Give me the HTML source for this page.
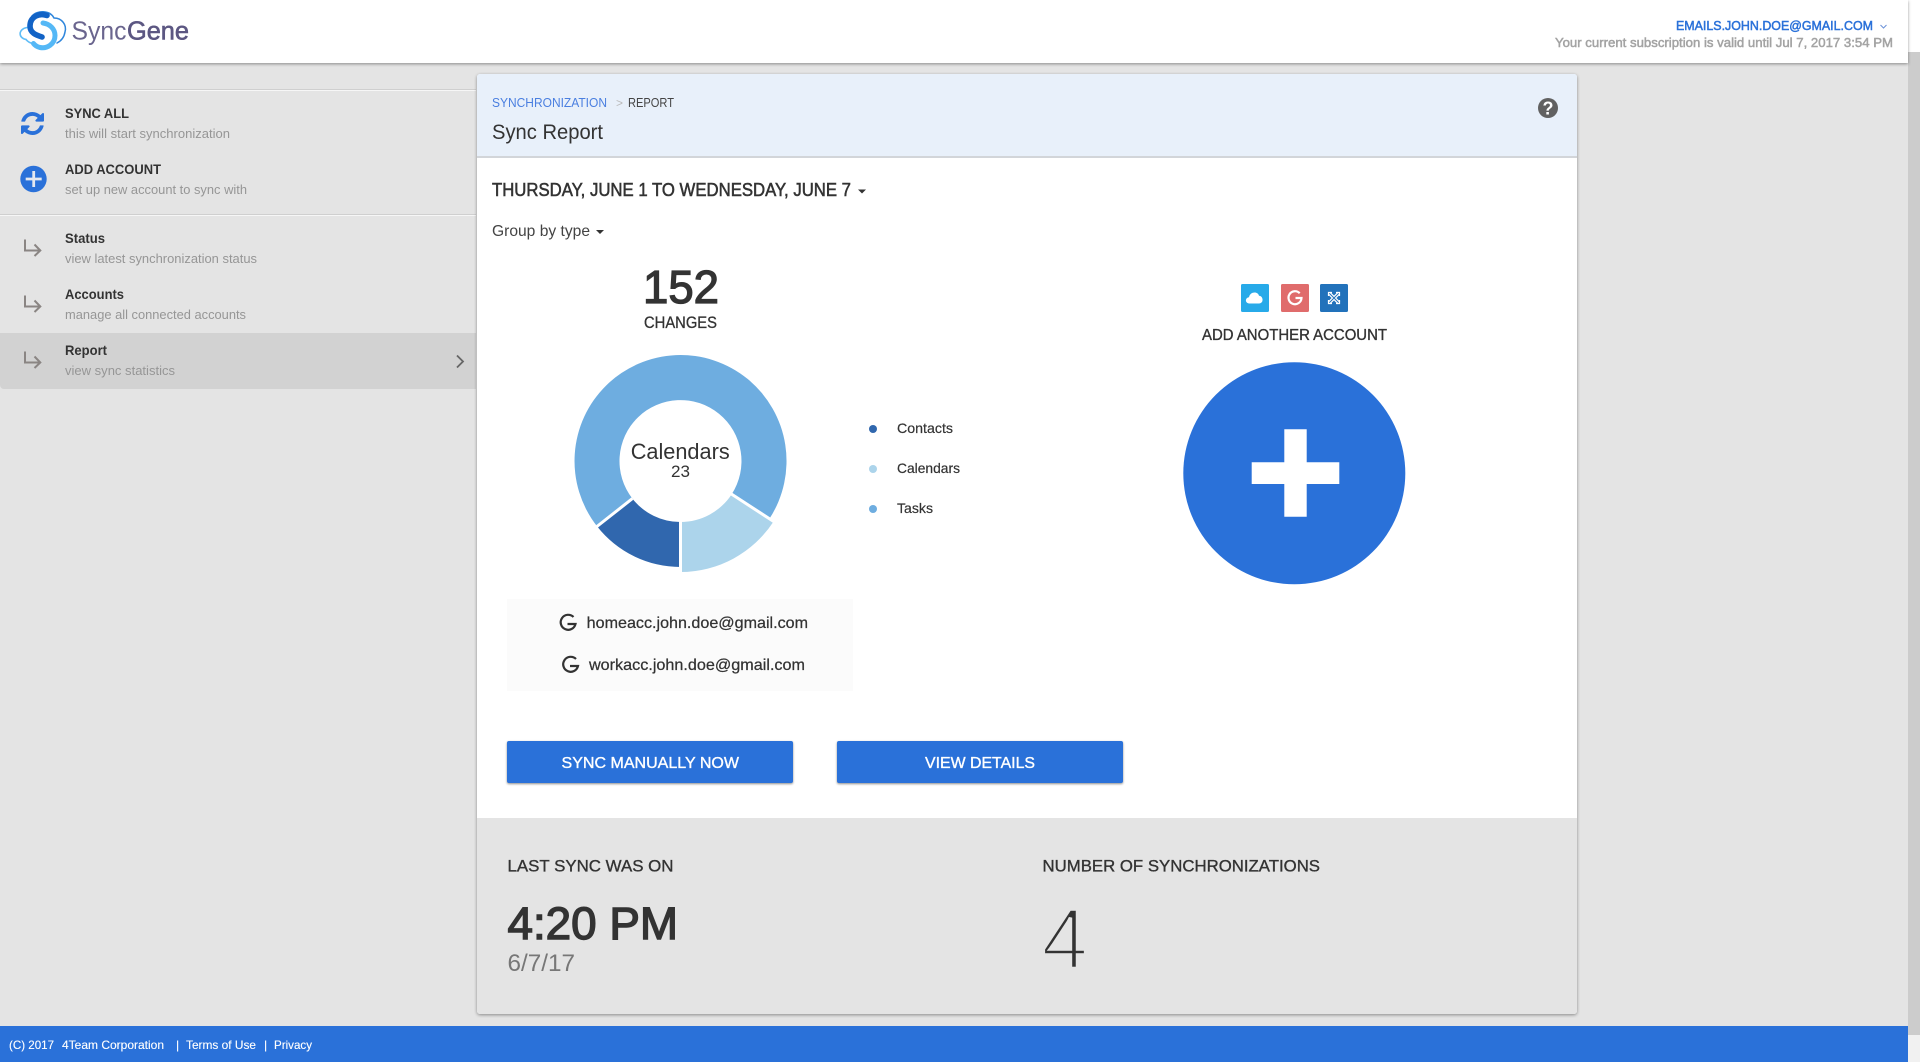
<!DOCTYPE html>
<html lang="en">
<head>
<meta charset="utf-8">
<title>SyncGene - Sync Report</title>
<style>
html,body{margin:0;padding:0;width:1920px;height:1062px;overflow:hidden;background:#e4e4e4;font-family:"Liberation Sans",Arial,sans-serif}
.b{position:absolute}
svg{position:absolute;left:0;top:0}
text{font-family:"Liberation Sans",Arial,sans-serif;fill:#333;white-space:pre}
.m{stroke:currentColor;stroke-width:.3;color:#333}
.t{font-size:14px;font-weight:700;fill:#333}
.s{font-size:13px;fill:#969696}
.w{fill:#fff;font-size:12px;stroke:#fff;stroke-width:.12}
</style>
</head>
<body>
<div class="b" style="left:1908px;top:52px;width:12px;height:983px;background:#ccc"></div>
<div class="b" style="left:1908px;top:1035px;width:12px;height:27px;background:#f1f1f1"></div>
<div class="b" style="left:1908px;top:0;width:12px;height:52px;background:#fff"></div>

<!-- sidebar -->
<div class="b" style="left:0;top:89px;width:476px;height:1px;background:#cfcfcf"></div>
<div class="b" style="left:0;top:90px;width:476px;height:1px;background:#f6f6f6"></div>
<div class="b" style="left:0;top:214px;width:476px;height:1px;background:#cfcfcf"></div>
<div class="b" style="left:0;top:215px;width:476px;height:1px;background:#f6f6f6"></div>
<div class="b" style="left:0;top:333px;width:476px;height:56px;background:#d2d2d2;border-radius:0 0 0 4px"></div>

<!-- header -->
<div class="b" style="left:0;top:0;width:1908px;height:63px;background:#fff;box-shadow:0 1px 3px rgba(0,0,0,.4)"></div>

<!-- card -->
<div class="b" style="left:477px;top:74px;width:1100px;height:940px;background:#fff;border-radius:3px;box-shadow:0 1px 3px rgba(0,0,0,.4);overflow:hidden">
  <div class="b" style="left:0;top:0;width:1100px;height:82px;background:#e8f0fa;border-bottom:2px solid #d2d5d9"></div>
  <div class="b" style="left:0;top:744px;width:1100px;height:196px;background:#e4e4e4"></div>
</div>

<div class="b" style="left:507px;top:599px;width:346px;height:92px;background:#fbfbfb"></div>
<div class="b" style="left:507px;top:741px;width:286px;height:42px;background:#2a71d9;border-radius:2px;box-shadow:0 1px 2px rgba(0,0,0,.45)"></div>
<div class="b" style="left:837px;top:741px;width:286px;height:42px;background:#2a71d9;border-radius:2px;box-shadow:0 1px 2px rgba(0,0,0,.45)"></div>

<!-- footer -->
<div class="b" style="left:0;top:1026px;width:1908px;height:36px;background:#2a71d9"></div>

<svg width="1920" height="1062" viewBox="0 0 1920 1062" xmlns="http://www.w3.org/2000/svg">
  <!-- logo -->
  <g fill="none" stroke-linecap="round">
    <path d="M26 39.500C18 38 18 29 27 27.500" stroke="#5fbdf7" stroke-width="1.600"/>
    <path d="M32 16C37 10 50 10 54 18C62 18 67 25 65 32C64 38 61 41 57 43" stroke="#2f86dc" stroke-width="1.500"/>
    <path d="M26 39.500C28 42 30 43 33 43.500" stroke="#5fbdf7" stroke-width="1.600"/>
    <path d="M43 23C50 24 55 29 55 35.500C55 44 47 49 40 47.500C37 46.800 35 45.500 33.500 43.500" stroke="#55b8f6" stroke-width="5"/>
    <path d="M47 15.500C39 12.500 30 17 30 26C30 33 36 35 42 37" stroke="#1263c6" stroke-width="5.600"/>
  </g>
  <text x="71.500" y="39.500" font-size="26" style="fill:#6a658e" textLength="55" lengthAdjust="spacingAndGlyphs">Sync</text>
  <text x="127" y="39.500" font-size="26" class="m" style="fill:#5c5782;color:#5c5782;stroke-width:.6" textLength="62" lengthAdjust="spacingAndGlyphs">Gene</text>

  <!-- top right -->
  <text x="1676" y="30" font-size="13" class="m" style="fill:#2a71d9;color:#2a71d9;stroke-width:.5" textLength="197" lengthAdjust="spacingAndGlyphs">EMAILS.JOHN.DOE@GMAIL.COM</text>
  <path d="M1880.500 25L1883.500 28L1886.500 25" fill="none" stroke="#6c93d8" stroke-width="1"/>
  <text x="1555" y="47" font-size="13" class="m" style="fill:#a3a3a3;color:#a3a3a3;stroke-width:.5" textLength="338" lengthAdjust="spacingAndGlyphs">Your current subscription is valid until Jul 7, 2017 3:54 PM</text>

  <!-- sidebar icons -->
  <svg x="21" y="112" width="23" height="23" viewBox="0 0 1536 1536"><path fill="#2a71d9" d="M1511 928q0 5-1 7-64 268-268 434.5t-478 166.5q-146 0-282.5-55t-243.5-157l-129 129q-19 19-45 19t-45-19-19-45v-448q0-26 19-45t45-19h448q26 0 45 19t19 45-19 45l-137 137q71 66 161 102t187 36q134 0 250-65t186-179q11-17 53-117 8-23 30-23h192q13 0 22.5 9.5t9.5 22.5zm25-800v448q0 26-19 45t-45 19h-448q-26 0-45-19t-19-45 19-45l138-138q-148-137-349-137-134 0-250 65t-186 179q-11 17-53 117-8 23-30 23h-199q-13 0-22.5-9.5t-9.5-22.5v-7q65-268 270-434.5t480-166.5q146 0 284 55.5t245 156.5l130-129q19-19 45-19t45 19 19 45z"/></svg>
  <circle cx="33.500" cy="179" r="13.200" fill="#2a71d9"/>
  <path d="M25.700 179H41.700M33.700 171V187" stroke="#e4e8ef" stroke-width="2.800" fill="none"/>
  <g fill="none" stroke="#8a8583" stroke-width="2">
    <path d="M25 239.500V250.500H39.500M34.500 244.500L40.300 250.500L34.500 256"/>
    <path d="M25 295.500V306.500H39.500M34.500 300.500L40.300 306.500L34.500 312"/>
    <path d="M25 351.500V362.500H39.500M34.500 356.500L40.300 362.500L34.500 368"/>
  </g>
  <path d="M457 355.500L463 361.500L457 367.500" fill="none" stroke="#666" stroke-width="1.800"/>

  <!-- sidebar text -->
  <text x="65" y="118" class="t" textLength="64" lengthAdjust="spacingAndGlyphs">SYNC ALL</text>
  <text x="65" y="138" class="s" textLength="165" lengthAdjust="spacingAndGlyphs">this will start synchronization</text>
  <text x="65" y="174" class="t" textLength="96" lengthAdjust="spacingAndGlyphs">ADD ACCOUNT</text>
  <text x="65" y="194" class="s" textLength="182" lengthAdjust="spacingAndGlyphs">set up new account to sync with</text>
  <text x="65" y="243" class="t" textLength="40" lengthAdjust="spacingAndGlyphs">Status</text>
  <text x="65" y="263" class="s" textLength="192" lengthAdjust="spacingAndGlyphs">view latest synchronization status</text>
  <text x="65" y="299" class="t" textLength="59" lengthAdjust="spacingAndGlyphs">Accounts</text>
  <text x="65" y="319" class="s" textLength="181" lengthAdjust="spacingAndGlyphs">manage all connected accounts</text>
  <text x="65" y="355" class="t" textLength="42" lengthAdjust="spacingAndGlyphs">Report</text>
  <text x="65" y="375" class="s" textLength="110" lengthAdjust="spacingAndGlyphs">view sync statistics</text>

  <!-- card header -->
  <text x="492" y="107" font-size="13" style="fill:#4a7fe0" textLength="115" lengthAdjust="spacingAndGlyphs">SYNCHRONIZATION</text>
  <text x="616" y="107" font-size="12" style="fill:#bbb" textLength="7" lengthAdjust="spacingAndGlyphs">&gt;</text>
  <text x="628" y="107" font-size="13" style="fill:#444" textLength="46" lengthAdjust="spacingAndGlyphs">REPORT</text>
  <text x="492" y="139" font-size="21" textLength="111" lengthAdjust="spacingAndGlyphs">Sync Report</text>
  <circle cx="1548" cy="108" r="10" fill="#616161"/>
  <text x="1548" y="114.500" font-size="18" font-weight="700" text-anchor="middle" style="fill:#fff">?</text>

  <text x="492" y="196" font-size="18.500" class="m" style="stroke-width:.55" textLength="359" lengthAdjust="spacingAndGlyphs">THURSDAY, JUNE 1 TO WEDNESDAY, JUNE 7</text>
  <path d="M858 189.500H866L862 193.500Z" fill="#333"/>
  <text x="492" y="236" font-size="16" style="fill:#444" textLength="98" lengthAdjust="spacingAndGlyphs">Group by type</text>
  <path d="M596 230H604L600 234Z" fill="#333"/>

  <text x="643" y="303" font-size="46" class="m" style="stroke-width:1.300" textLength="76" lengthAdjust="spacingAndGlyphs">152</text>
  <text x="644" y="328" font-size="17" class="m" style="stroke-width:.3" textLength="73" lengthAdjust="spacingAndGlyphs">CHANGES</text>

  <!-- donut -->
  <path fill="#6eade0" d="M769.400 518.800A106 106 0 1 0 597 526.300L632.400 498.600A61 61 0 1 1 731.700 494.200Z"/>
  <path fill="#3067ae" d="M680.500 567A106 106 0 0 1 597 526.300L632.400 498.600A61 61 0 0 0 680.500 522Z"/>
  <path fill="#acd4eb" d="M680.500 572A111 111 0 0 0 773.600 521.500L731.700 494.200A61 61 0 0 1 680.500 522Z"/>
  <path d="M680.500 520V574M731 493.800L776 523M632.400 498.600L595 528" stroke="#fff" stroke-width="3" fill="none"/>
  <text x="630.700" y="459" font-size="22" textLength="99" lengthAdjust="spacingAndGlyphs">Calendars</text>
  <text x="671" y="477" font-size="17" textLength="19" lengthAdjust="spacingAndGlyphs">23</text>

  <circle cx="873" cy="429" r="4" fill="#3067ae"/>
  <circle cx="873" cy="469" r="4" fill="#acd4eb"/>
  <circle cx="873" cy="509" r="4" fill="#6eade0"/>
  <text x="897" y="433" font-size="14" class="m" style="stroke-width:.2" textLength="56" lengthAdjust="spacingAndGlyphs">Contacts</text>
  <text x="897" y="473" font-size="14" class="m" style="stroke-width:.2" textLength="63" lengthAdjust="spacingAndGlyphs">Calendars</text>
  <text x="897" y="513" font-size="14" class="m" style="stroke-width:.2" textLength="36" lengthAdjust="spacingAndGlyphs">Tasks</text>

  <!-- service icons -->
  <rect x="1241" y="284" width="28" height="28" rx="1.500" fill="#27aae9"/>
  <path fill="#fff" d="M1250 303.500C1244.500 303.500 1245 297.500 1249 297.200C1250 291.500 1258 291 1259 295.800C1263.500 296 1264 303.500 1259 303.500Z"/>
  <rect x="1281" y="284" width="28" height="28" rx="1.500" fill="#e06c6c"/>
  <path d="M1299.700 293.200A6.500 6.500 0 1 0 1301.500 298H1295.500" fill="none" stroke="#fff" stroke-width="2.200"/>
  <rect x="1320" y="284" width="28" height="28" rx="1.500" fill="#2272bb"/>
  <path d="M1329 293L1339 303M1339 293L1329 303" stroke="#fff" stroke-width="3.400" fill="none"/>
  <path d="M1329 293L1339 303M1339 293L1329 303" stroke="#2272bb" stroke-width="1" fill="none"/>
  <path d="M1328.500 296V292.500H1332M1336 292.500H1339.500V296M1339.500 300V303.500H1336M1332 303.500H1328.500V300" stroke="#fff" stroke-width="1.200" fill="none"/>

  <text x="1202" y="340" font-size="16" class="m" style="stroke-width:.35" textLength="185" lengthAdjust="spacingAndGlyphs">ADD ANOTHER ACCOUNT</text>
  <circle cx="1294.300" cy="473.300" r="111" fill="#2a71d9"/>
  <path fill="#fff" d="M1284.300 429.300H1306.700V462.300H1339.300V484H1306.700V516.700H1284.300V484H1251.700V462.300H1284.300Z"/>

  <!-- accounts -->
  <path d="M573.500 617A7.500 7.500 0 1 0 575.500 624H567.500" fill="none" stroke="#333" stroke-width="2.200"/>
  <text x="586.700" y="628" font-size="16" class="m" style="stroke-width:.25" textLength="221.300" lengthAdjust="spacingAndGlyphs">homeacc.john.doe@gmail.com</text>
  <path d="M576 659A7.500 7.500 0 1 0 578 666H570" fill="none" stroke="#333" stroke-width="2.200"/>
  <text x="589" y="670" font-size="16" class="m" style="stroke-width:.25" textLength="216" lengthAdjust="spacingAndGlyphs">workacc.john.doe@gmail.com</text>

  <!-- buttons -->
  <text x="561.500" y="768" font-size="16" class="m" style="fill:#fff;color:#fff;stroke-width:.35" textLength="177.500" lengthAdjust="spacingAndGlyphs">SYNC MANUALLY NOW</text>
  <text x="925" y="768" font-size="16" class="m" style="fill:#fff;color:#fff;stroke-width:.35" textLength="110" lengthAdjust="spacingAndGlyphs">VIEW DETAILS</text>

  <!-- stats -->
  <text x="507.500" y="871.500" font-size="17" class="m" style="stroke-width:.35" textLength="166" lengthAdjust="spacingAndGlyphs">LAST SYNC WAS ON</text>
  <text x="1042.500" y="871.500" font-size="17" class="m" style="stroke-width:.35" textLength="277.500" lengthAdjust="spacingAndGlyphs">NUMBER OF SYNCHRONIZATIONS</text>
  <text x="507.500" y="939" font-size="45" class="m" style="stroke-width:1.400" textLength="170.500" lengthAdjust="spacingAndGlyphs">4:20 PM</text>
  <text x="507.500" y="971" font-size="24" style="fill:#777" textLength="67.500" lengthAdjust="spacingAndGlyphs">6/7/17</text>
  <text x="1041.500" y="968.500" font-size="86" style="fill:#333;stroke:#e4e4e4;stroke-width:3.400" textLength="46.500" lengthAdjust="spacingAndGlyphs">4</text>

  <!-- footer -->
  <text x="9" y="1049" class="w" textLength="45" lengthAdjust="spacingAndGlyphs">(C) 2017</text>
  <text x="62" y="1049" class="w" textLength="102" lengthAdjust="spacingAndGlyphs">4Team Corporation</text>
  <text x="176" y="1049" class="w">|</text>
  <text x="186" y="1049" class="w" textLength="70" lengthAdjust="spacingAndGlyphs">Terms of Use</text>
  <text x="264" y="1049" class="w">|</text>
  <text x="274" y="1049" class="w" textLength="38" lengthAdjust="spacingAndGlyphs">Privacy</text>
</svg>
</body>
</html>
